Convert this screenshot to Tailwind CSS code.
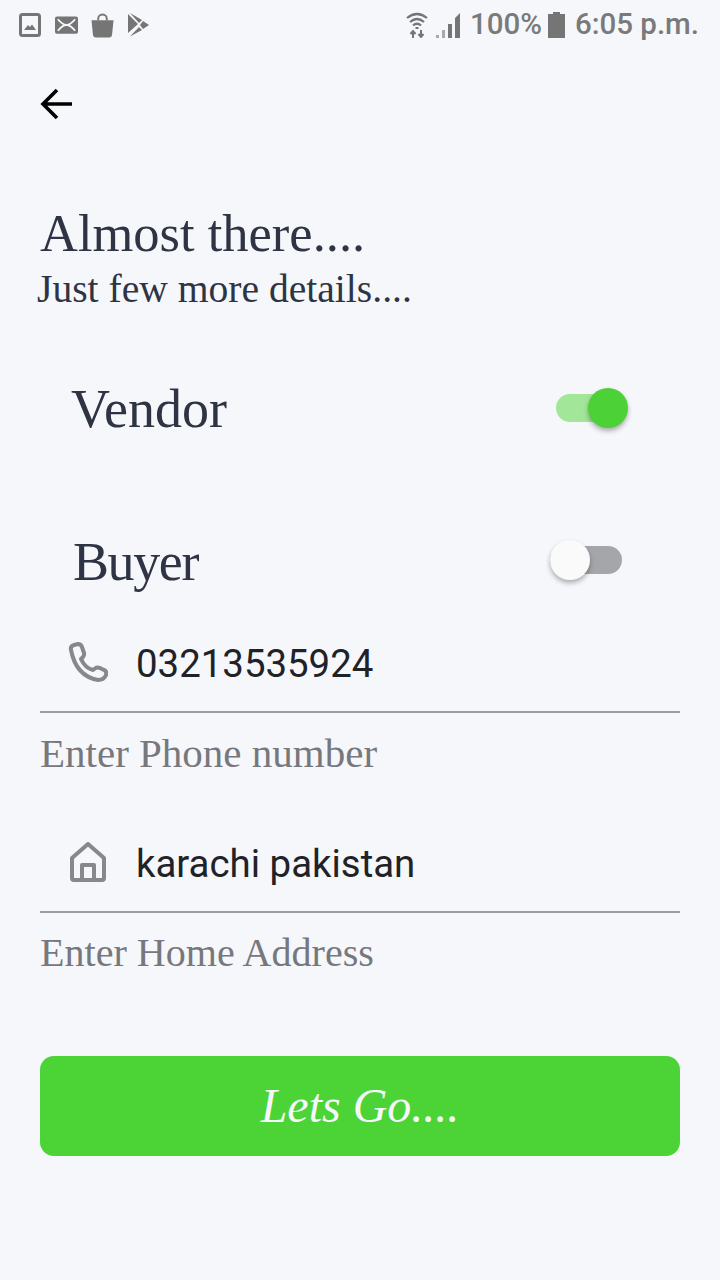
<!DOCTYPE html>
<html lang="en">
<head>
    <meta charset="UTF-8">
    <meta name="viewport" content="width=device-width, initial-scale=1.0">
    <title>Almost there</title>
    <script src="https://cdn.jsdelivr.net/npm/@tailwindcss/browser@4"></script>
</head>
<body class="bg-[#f5f7fb] h-[1280px] overflow-hidden font-['Liberation_Serif',serif]">
    <!-- status bar -->
    <div class="h-[50px] pl-[19px] pr-[21px] flex items-center justify-between text-[#7a7a7a] font-['Roboto',sans-serif]">
        <div class="flex items-center gap-[13.5px]">
            <svg class="w-[22px] h-[24px]" viewBox="0 0 22 24" fill="none">
                <rect x="1.5" y="1.5" width="19" height="21" rx="2" stroke="#757575" stroke-width="3"/>
                <path d="M5 17 L9 12 L11 14 L13 11.5 L17 17 Z" fill="#757575"/>
            </svg>
            <svg class="w-[23px] h-[18px]" viewBox="0 0 24 18">
                <rect width="24" height="18" rx="2" fill="#757575"/>
                <path d="M3 3 Q8 9 12 9 Q16 9 21 3 M3 15 Q8 9 12 9 Q16 9 21 15" stroke="#f5f7fb" stroke-width="2" fill="none"/>
            </svg>
            <svg class="w-[23px] h-[25px]" viewBox="0 0 24 25">
                <path d="M7.5 7 V5.5 a4.5 4.5 0 0 1 9 0 V7" stroke="#757575" stroke-width="2" fill="none"/>
                <path d="M0.5 7 H23.5 L22 22 Q21.7 25 19 25 H5 Q2.3 25 2 22 Z" fill="#757575"/>
            </svg>
            <svg class="w-[22px] h-[24px]" viewBox="0 0 22 24">
                <path d="M0 1 L10 11 L0 20 Z M2 0 L14 7 L11 10 Z M15 8 L21 12 L15 16 L12 12 Z M2 23.5 L14 17 L11 14 Z" fill="#757575"/>
            </svg>
        </div>
        <div class="flex items-center text-[29.5px] leading-none font-medium">
            <svg class="w-[22px] h-[26px] mr-[8px]" viewBox="0 0 22 26" fill="none" stroke="#757575" stroke-width="2.200">
                <path d="M1 6 Q11 -2 21 6 M4 10 Q11 4 18 10 M7 13.5 Q11 10 15 13.5"/>
                <path d="M11 15 L11 17" stroke-width="3"/>
                <path d="M7 19 V26 M4.5 22 L7 19 L9.500 22 M15 18 V25 M12.5 22 L15 25 L17.500 22" stroke-width="2" transform="rotate(180 11 22)"/>
            </svg>
            <svg class="w-[24px] h-[25px] mr-[10px]" viewBox="0 0 24 25" fill="#757575">
                <path opacity="0.6" d="M0 25 h3 v-3 h-3z M6 25 h3 v-8 h-3z"/>
                <path d="M12 25 h4 v-14 h-4z M19 25 h5 v-25 l-5 5z"/>
            </svg>
            <span>100%</span>
            <svg class="w-[17px] h-[26px] ml-[6px] mr-[10px]" viewBox="0 0 17 26" fill="#757575">
                <path d="M5 0 h7 v2 h5 v24 h-17 v-24 h5z"/>
            </svg>
            <span>6:05 p.m.</span>
        </div>
    </div>

    <!-- back -->
    <div class="pl-[40px] pt-[38px] h-[151px]">
        <svg class="w-[33px] h-[32px]" viewBox="0 0 33 32" fill="none" stroke="#000" stroke-width="3.6">
            <path d="M32 16 H3 M17 2 L3 16 L17 30"/>
        </svg>
    </div>

    <div class="pl-[40px] text-[#2f3444]">
        <h1 class="text-[52.5px] leading-[64px] h-[64px] font-normal">Almost there....</h1>
        <p class="text-[39.6px] leading-[46px] mt-[1px] -ml-[3px]">Just few more details....</p>
    </div>

    <!-- roles -->
    <div class="pl-[72px] text-[#2f3444] text-[54px] leading-[64px]">
        <div class="flex items-center h-[64px] mt-[65px] relative">
            <span class="-ml-[1px]">Vendor</span>
            <div class="absolute left-[484px] top-[17px] w-[60px] h-[28px] rounded-full bg-[#a2e799]"></div>
            <div class="absolute left-[516px] top-[11px] w-[40px] h-[40px] rounded-full bg-[#4cd137] shadow-[0_3px_5px_rgba(0,0,0,0.3)]"></div>
        </div>
        <div class="flex items-center h-[64px] mt-[89px] relative">
            <span class="ml-[1px] tracking-[-1.4px]">Buyer</span>
            <div class="absolute left-[478px] top-[16px] w-[72px] h-[28px] rounded-full bg-[#a5a6aa]"></div>
            <div class="absolute left-[478px] top-[10px] w-[40px] h-[40px] rounded-full bg-[#fafafa] shadow-[0_3px_5px_rgba(0,0,0,0.3)]"></div>
        </div>
    </div>

    <!-- fields -->
    <div class="px-[40px] mt-[19px]">
        <div class="h-[100px] flex items-center border-b-2 border-[#9b9ca1]">
            <svg class="w-[40px] h-[40px] ml-[28px]" viewBox="0 0 40 40" fill="none" stroke="#87888c" stroke-width="4" stroke-linejoin="round">
                <path d="M3 8 Q2 4 6 3 L10 2 Q13 2 14 5 L16 11 Q16.500 13 15 15 L13 17 Q17 26 25 28 L27 26.500 Q29 25 32 26 L36 28 Q39 29 38 33 Q36 38 30 38 Q8 34 3 8 Z"/>
            </svg>
            <span class="ml-[28px] pt-[3px] font-['Roboto',sans-serif] text-[38.4px] text-[#212227]">03213535924</span>
        </div>
        <p class="text-[41px] leading-[46px] mt-[17px] text-[#77787d]">Enter Phone number</p>

        <div class="h-[100px] mt-[37px] flex items-center border-b-2 border-[#9b9ca1]">
            <svg class="w-[40px] h-[40px] ml-[28px]" viewBox="0 0 40 40" fill="none" stroke="#87888c" stroke-width="4" stroke-linejoin="round">
                <path d="M4 16 L20 2 L36 16 V36 Q36 38 34 38 H6 Q4 38 4 36 Z"/>
                <path d="M14 38 V23 H26 V38"/>
            </svg>
            <span class="ml-[28px] pt-[3px] font-['Roboto',sans-serif] text-[38.4px] text-[#212227]">karachi pakistan</span>
        </div>
        <p class="text-[40.1px] leading-[46px] mt-[17px] text-[#77787d]">Enter Home Address</p>

        <button class="mt-[80px] w-full h-[100px] rounded-[14px] bg-[#4cd437] text-[#f5f7fb] text-[48px] italic">Lets Go....</button>
    </div>
</body>
</html>
